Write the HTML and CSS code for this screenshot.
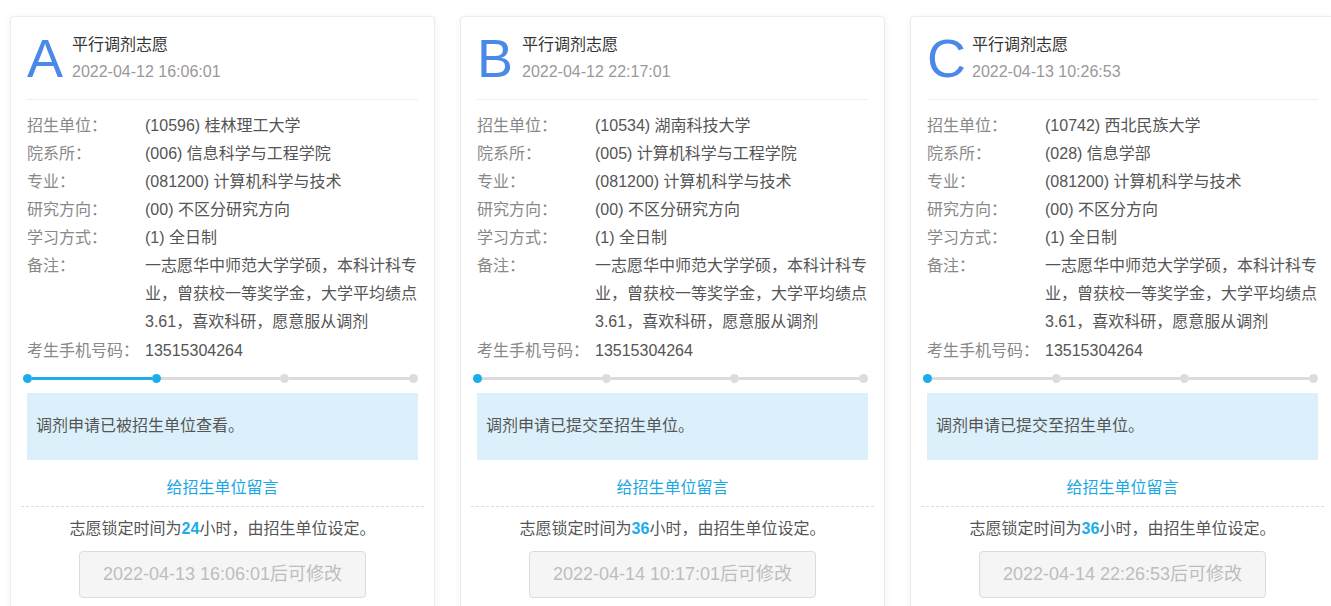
FILE: index.html
```html
<!DOCTYPE html>
<html lang="zh-CN">
<head>
<meta charset="utf-8">
<title>平行调剂志愿</title>
<link rel="stylesheet" href="styles.css">
</head>
<body>
<div class="cards">

  <section class="card">
    <header class="card-head">
      <div class="letter">A</div>
      <div class="head-text">
        <div class="title">平行调剂志愿</div>
        <div class="date">2022-04-12 16:06:01</div>
      </div>
    </header>
    <dl class="fields">
      <div class="row"><dt>招生单位：</dt><dd>(10596) 桂林理工大学</dd></div>
      <div class="row"><dt>院系所：</dt><dd>(006) 信息科学与工程学院</dd></div>
      <div class="row"><dt>专业：</dt><dd>(081200) 计算机科学与技术</dd></div>
      <div class="row"><dt>研究方向：</dt><dd>(00) 不区分研究方向</dd></div>
      <div class="row"><dt>学习方式：</dt><dd>(1) 全日制</dd></div>
      <div class="row"><dt>备注：</dt><dd>一志愿华中师范大学学硕，本科计科专业，曾获校一等奖学金，大学平均绩点3.61，喜欢科研，愿意服从调剂</dd></div>
      <div class="row"><dt>考生手机号码：</dt><dd>13515304264</dd></div>
    </dl>
    <div class="steps">
      <span class="dot on"></span><span class="seg on"></span><span class="dot on"></span><span class="seg"></span><span class="dot"></span><span class="seg"></span><span class="dot"></span>
    </div>
    <div class="notice">调剂申请已被招生单位查看。</div>
    <a class="msg-link" href="#">给招生单位留言</a>
    <p class="lock">志愿锁定时间为<b>24</b>小时，由招生单位设定。</p>
    <div class="btn-wrap"><button class="btn" disabled>2022-04-13 16:06:01后可修改</button></div>
  </section>

  <section class="card">
    <header class="card-head">
      <div class="letter">B</div>
      <div class="head-text">
        <div class="title">平行调剂志愿</div>
        <div class="date">2022-04-12 22:17:01</div>
      </div>
    </header>
    <dl class="fields">
      <div class="row"><dt>招生单位：</dt><dd>(10534) 湖南科技大学</dd></div>
      <div class="row"><dt>院系所：</dt><dd>(005) 计算机科学与工程学院</dd></div>
      <div class="row"><dt>专业：</dt><dd>(081200) 计算机科学与技术</dd></div>
      <div class="row"><dt>研究方向：</dt><dd>(00) 不区分研究方向</dd></div>
      <div class="row"><dt>学习方式：</dt><dd>(1) 全日制</dd></div>
      <div class="row"><dt>备注：</dt><dd>一志愿华中师范大学学硕，本科计科专业，曾获校一等奖学金，大学平均绩点3.61，喜欢科研，愿意服从调剂</dd></div>
      <div class="row"><dt>考生手机号码：</dt><dd>13515304264</dd></div>
    </dl>
    <div class="steps">
      <span class="dot on"></span><span class="seg"></span><span class="dot"></span><span class="seg"></span><span class="dot"></span><span class="seg"></span><span class="dot"></span>
    </div>
    <div class="notice">调剂申请已提交至招生单位。</div>
    <a class="msg-link" href="#">给招生单位留言</a>
    <p class="lock">志愿锁定时间为<b>36</b>小时，由招生单位设定。</p>
    <div class="btn-wrap"><button class="btn" disabled>2022-04-14 10:17:01后可修改</button></div>
  </section>

  <section class="card">
    <header class="card-head">
      <div class="letter">C</div>
      <div class="head-text">
        <div class="title">平行调剂志愿</div>
        <div class="date">2022-04-13 10:26:53</div>
      </div>
    </header>
    <dl class="fields">
      <div class="row"><dt>招生单位：</dt><dd>(10742) 西北民族大学</dd></div>
      <div class="row"><dt>院系所：</dt><dd>(028) 信息学部</dd></div>
      <div class="row"><dt>专业：</dt><dd>(081200) 计算机科学与技术</dd></div>
      <div class="row"><dt>研究方向：</dt><dd>(00) 不区分方向</dd></div>
      <div class="row"><dt>学习方式：</dt><dd>(1) 全日制</dd></div>
      <div class="row"><dt>备注：</dt><dd>一志愿华中师范大学学硕，本科计科专业，曾获校一等奖学金，大学平均绩点3.61，喜欢科研，愿意服从调剂</dd></div>
      <div class="row"><dt>考生手机号码：</dt><dd>13515304264</dd></div>
    </dl>
    <div class="steps">
      <span class="dot on"></span><span class="seg"></span><span class="dot"></span><span class="seg"></span><span class="dot"></span><span class="seg"></span><span class="dot"></span>
    </div>
    <div class="notice">调剂申请已提交至招生单位。</div>
    <a class="msg-link" href="#">给招生单位留言</a>
    <p class="lock">志愿锁定时间为<b>36</b>小时，由招生单位设定。</p>
    <div class="btn-wrap"><button class="btn" disabled>2022-04-14 22:26:53后可修改</button></div>
  </section>

</div>
</body>
</html>
```

FILE: styles.css
```css
html, body {
  margin: 0;
  padding: 0;
  overflow: hidden;
  background: #fff;
}

body {
  font-family: "Liberation Sans", Arial, "Noto Sans CJK SC", sans-serif;
  font-size: 16px;
  color: #555;
}

.cards {
  display: flex;
  gap: 25px;
  padding: 16px 0 0 10px;
  width: max-content;
}

.card {
  flex: 0 0 auto;
  box-sizing: border-box;
  width: 425px;
  padding: 0 16px 20px;
  border: 1px solid #ececec;
  border-radius: 4px;
  box-shadow: 0 1px 6px rgba(0, 0, 0, 0.06);
  background: #fff;
}

.card-head {
  display: flex;
  align-items: flex-start;
  padding: 14px 0 14px;
  border-bottom: 1px solid #eeeeee;
}

.letter {
  width: 45px;
  flex: 0 0 45px;
  font-size: 54px;
  line-height: 54px;
  color: #4a89e8;
}

.head-text {
  padding-top: 3px;
}

.title {
  line-height: 22px;
  color: #333;
}

.date {
  margin-top: 5px;
  line-height: 22px;
  color: #999;
}

.fields {
  margin: 0;
  padding-top: 12px;
}

.row {
  display: flex;
  line-height: 28px;
}

.row dt {
  flex: 0 0 118px;
  color: #888;
}

.row dd {
  margin: 0;
  flex: 1;
  color: #555;
}

.row + .row:last-child {
  margin-top: 1px;
}

.steps {
  display: flex;
  align-items: center;
  height: 9px;
  margin: 9px 0 0 -4px;
}

.dot {
  flex: 0 0 9px;
  width: 9px;
  height: 9px;
  border-radius: 50%;
  background: #dcdcdc;
}

.seg {
  flex: 1;
  height: 3px;
  background: #dcdcdc;
}

.dot.on,
.seg.on {
  background: #1badea;
}

.notice {
  margin-top: 10px;
  padding: 22px 9px 23px;
  line-height: 22px;
  background: #dbf0fb;
  color: #555;
}

.msg-link {
  display: block;
  margin: 0 -6px;
  padding: 17px 0 7px;
  line-height: 22px;
  text-align: center;
  color: #1aa7e4;
  text-decoration: none;
  border-bottom: 1px dashed #dddddd;
}

.lock {
  margin: 11px 0 0;
  line-height: 22px;
  text-align: center;
  color: #555;
}

.lock b {
  color: #1badea;
}

.btn-wrap {
  margin-top: 11px;
  text-align: center;
}

.btn {
  display: inline-block;
  padding: 12px 23px;
  font-family: inherit;
  font-size: 18px;
  line-height: 21px;
  color: #bdbdbd;
  background: #f5f5f5;
  border: 1px solid #dcdcdc;
  border-radius: 4px;
}
```
